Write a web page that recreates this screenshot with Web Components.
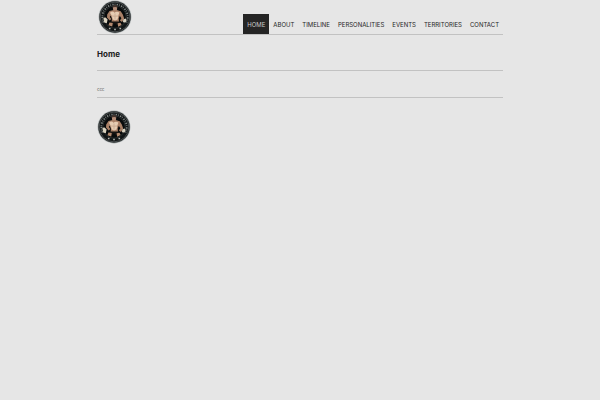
<!DOCTYPE html>
<html lang="en">
<head>
<meta charset="utf-8">
<title>Home</title>
<style>
html { background: #e6e6e6; }
body { margin: 0; font: 6px/12px Inter, "Noto Sans", sans-serif; color: #252525; }
</style>
</head>
<body>
<template id="logo">
<style>
:host { display: block; width: 34px; height: 34px; }
svg { display: block; width: 100%; height: 100%; }
</style>
<svg viewBox="0 0 34 34" role="img" aria-label="Wrestling emblem">
<circle cx="17" cy="17" r="16.4" fill="#a7adad"/>
<circle cx="17" cy="17" r="15.7" fill="#111516"/>
<circle cx="17" cy="17" r="14.9" fill="none" stroke="#858b8b" stroke-width=".5"/>
<path d="M5.5 22.5A12.7 12.7 0 1 1 28.5 22.5" fill="none" stroke="#858a88" stroke-width="1.7" stroke-dasharray="1.3 1.1 .7 1.4"/>
<circle cx="17" cy="17" r="11.2" fill="#080b0c" stroke="#565b5a" stroke-width=".4"/>
<path d="M14.8 6.4Q17 4.7 19.2 6.5L19 9.7L17.2 11L15.1 9.8Z" fill="#b58e79"/>
<path d="M14.6 7.5Q14.5 4.8 17.2 5Q19.7 5.2 19.3 7.6L17.2 6.9Z" fill="#45352e"/>
<path d="M15.5 10L11.5 11L9.2 14.5L9 17.5L11.7 20.6L13.4 19L11.8 17L12.6 15.5L14 18.8L13.6 22H21L20.7 18.4L21.8 15.8L23.4 18.2L21.9 20.4L24 22L26.2 18.6L24.8 14.5L22.7 11.3L18.8 10Z" fill="#a98067"/>
<path d="M12 12.7Q14.7 10.5 16.5 12.8Q18.7 10.8 21.4 12.6L20.2 16L19.6 19.5L17 20.5L14.8 19.5L13.6 15.5Z" fill="#e6ccb2"/>
<path d="M17 13.5V19.5M14 16L16.6 16.2M17.4 16.2L20 16" fill="none" stroke="#a07b66" stroke-width=".4"/>
<path d="M13 21.5H21.4L23 24.5L19.2 25.4L17 23.3L14.8 25.4L11.2 24.5Z" fill="#171412"/>
<path d="M11.4 22.4L14.8 23L14.2 26.6L10.5 25.2ZM19.6 23.3L22.5 22.8L23.6 25L20.2 26.8Z" fill="#b58b70"/>
<path d="M5.4 17.8L7.6 17.4L9.6 19.6L8.8 23.2L6.2 22.6ZM25.2 19.4L27.6 18.5L28.6 20.2L27.5 22.5L25 22.3Z" fill="#d9d1be"/>
<path d="M10.9 28.5H12.5M16.2 29.6H17.8M21.5 28.5H23.1" stroke="#b7b8b2" stroke-width="1.5"/>
</svg>
</template>

<template id="item">
<style>
:host { display: block; }
a { display: block; padding: 5px 4px 4px; color: inherit; text-decoration: none; }
:host([current]) a { background: #252525; color: #c9c9c9; }
</style>
<a href="#"><slot></slot></a>
</template>

<template id="header">
<style>
:host { display: flex; justify-content: space-between; align-items: flex-end; border-bottom: 1px solid #c2c2c2; }
.brand { display: block; padding-left: 1px; }
nav { display: flex; line-height: 11px; }
</style>
<a class="brand" href="#" aria-label="Home page"><slot name="logo"></slot></a>
<nav aria-label="Main"><slot></slot></nav>
</template>

<template id="page">
<style>
:host { display: block; box-sizing: border-box; width: 68%; max-width: 1200px; margin: 0 auto; padding: 0 1px; }
h1 { margin: 0; padding: 13px 0 10px; font-size: 8px; line-height: 12px; font-weight: 700; color: #202020; border-bottom: 1px solid #c2c2c2; }
.content { padding: 12px 0 2px; color: #777; border-bottom: 1px solid #c2c2c2; font: 5px/12px "Noto Sans CJK SC", sans-serif; }
.foot { padding-top: 12px; }
</style>
<slot name="header"></slot>
<main>
<h1><slot name="title"></slot></h1>
<div class="content"><slot></slot></div>
</main>
<footer class="foot"><slot name="footer"></slot></footer>
</template>

<wrestling-page>
<site-header slot="header">
<wrestling-logo slot="logo"></wrestling-logo>
<nav-item current>HOME</nav-item><nav-item>ABOUT</nav-item><nav-item>TIMELINE</nav-item><nav-item>PERSONALITIES</nav-item><nav-item>EVENTS</nav-item><nav-item>TERRITORIES</nav-item><nav-item>CONTACT</nav-item>
</site-header>
<span slot="title">Home</span>
<span>ccc</span>
<wrestling-logo slot="footer"></wrestling-logo>
</wrestling-page>

<script>
const define = (name, id) => customElements.define(name, class extends HTMLElement {
  constructor() {
    super();
    this.attachShadow({ mode: "open" }).append(document.getElementById(id).content.cloneNode(true));
  }
});
define("wrestling-logo", "logo");
define("nav-item", "item");
define("site-header", "header");
define("wrestling-page", "page");
</script>
</body>
</html>
